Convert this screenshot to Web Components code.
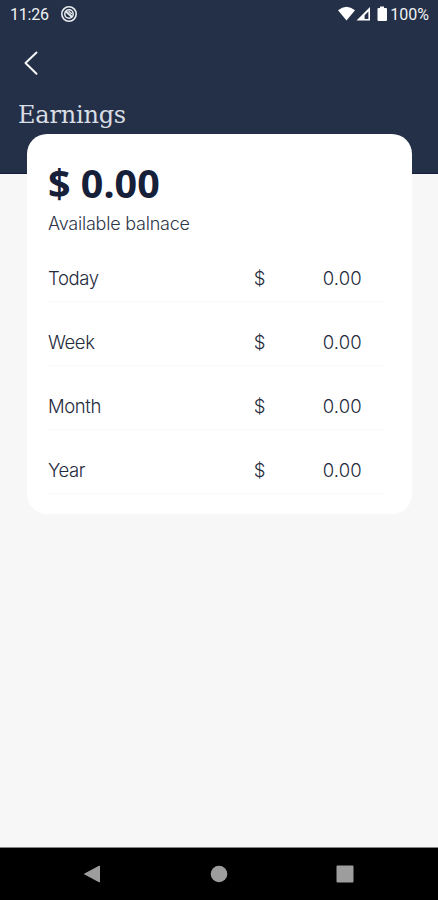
<!DOCTYPE html>
<html lang="en">
<head>
<meta charset="utf-8">
<meta name="viewport" content="width=device-width, initial-scale=1">
<title>Earnings</title>
<style>
    body {
        margin: 0;
        background-color: #f7f7f7;
    }
</style>
</head>
<body>
<earnings-screen></earnings-screen>
<script>
class StatusBar extends HTMLElement {
    constructor() {
        super()
        this.attachShadow({ mode: 'open' })
    }

    connectedCallback() {
        this.shadowRoot.innerHTML = `
            <style>
                :host {
                    display: flex;
                    align-items: center;
                    height: 28px;
                    padding: 1px 9px 0 10px;
                    box-sizing: border-box;
                    color: #f0f2f5;
                    font: 400 16px/28px Roboto, sans-serif;
                }

                svg {
                    display: block;
                    margin-bottom: 2px;
                }

                .time {
                    letter-spacing: -0.2px;
                }

                .app {
                    margin-left: 11px;
                }

                .right {
                    display: flex;
                    align-items: center;
                    margin-left: auto;
                }
            </style>
            <span class="time"><slot name="time"></slot></span>
            <svg class="app" width="18" height="18" viewBox="0 0 18 18" fill="none" stroke="#e8ebef">
                <circle cx="9" cy="9" r="7.2" stroke-width="1.6"/>
                <circle cx="9" cy="9" r="4.2" stroke-width="1.5"/>
                <path d="M5.5 6 L12 12" stroke-width="2"/>
                <path d="M8.5 6 L12 9" stroke-width="1.3"/>
            </svg>
            <div class="right">
                <svg width="52" height="18" viewBox="0 0 52 18" fill="#fff">
                    <path d="M0 5.3 Q8.5 -1.7 17 5.3 L8.5 15.5 Z"/>
                    <path d="M32 2 V15.5 H18.5 Z"/>
                    <path d="M30.4 6.5 V14 H26.6 V10.3 Z" fill="#243047"/>
                    <path d="M42 1.5 H46 V3 H48 Q49 3 49 4 V15 Q49 16 48 16 H40.5 Q39.5 16 39.5 15 V4 Q39.5 3 40.5 3 H42 Z"/>
                </svg>
                <span><slot name="battery"></slot></span>
            </div>
        `
    }
}

class ScreenHeader extends HTMLElement {
    constructor() {
        super()
        this.attachShadow({ mode: 'open' })
    }

    connectedCallback() {
        this.shadowRoot.innerHTML = `
            <style>
                :host {
                    display: block;
                    height: 174px;
                    box-sizing: border-box;
                    background-color: #243047;
                    border-bottom: 1px solid #131d38;
                }

                .back {
                    display: block;
                    margin: 22px 0 0 23px;
                }

                h1 {
                    margin: 21px 0 0 18px;
                    color: #d9dde4;
                    font: 200 24px/36px "Roboto Slab", "DejaVu Serif", serif;
                    letter-spacing: -0.2px;
                    white-space: nowrap;
                }
            </style>
            <slot name="status"></slot>
            <svg class="back" width="16" height="26" viewBox="0 0 16 26" fill="none" stroke="#f4f6f8" stroke-width="2" stroke-linecap="round" stroke-linejoin="round">
                <path d="M13.5 2.5 L2.5 13 L13.5 23.8"/>
            </svg>
            <h1><slot></slot></h1>
        `
    }
}

class EarningsRow extends HTMLElement {
    constructor() {
        super()
        this.attachShadow({ mode: 'open' })
    }

    connectedCallback() {
        this.shadowRoot.innerHTML = `
            <style>
                :host {
                    display: grid;
                    grid-template-columns: 190px 1fr auto;
                    align-items: center;
                    height: 64px;
                    box-sizing: border-box;
                    padding: 16px 24px 0 0;
                    border-bottom: 1px solid #fafafa;
                    color: #252b3c;
                    font: 300 18.5px/30px Inter, sans-serif;
                }

                .period {
                    letter-spacing: -0.4px;
                }

                .currency {
                    text-align: center;
                    width: 43px;
                }

                .amount {
                    letter-spacing: 0.2px;
                }
            </style>
            <span class="period"><slot></slot></span>
            <span class="currency"><slot name="currency"></slot></span>
            <span class="amount"><slot name="amount"></slot></span>
        `
    }
}

class BalanceCard extends HTMLElement {
    constructor() {
        super()
        this.attachShadow({ mode: 'open' })
    }

    connectedCallback() {
        this.shadowRoot.innerHTML = `
            <style>
                :host {
                    display: block;
                    height: 380px;
                    box-sizing: border-box;
                    margin: -40px 26px 0 27px;
                    padding: 25px 26px 0 21px;
                    border-radius: 20px;
                    background-color: #fff;
                }

                .balance {
                    color: #172039;
                    font: 700 39.5px/48px "Noto Sans", sans-serif;
                }

                .caption {
                    height: 31px;
                    color: #30364a;
                    font: 300 18px/34px Inter, sans-serif;
                    letter-spacing: -0.22px;
                }
            </style>
            <div class="balance"><slot name="balance"></slot></div>
            <div class="caption"><slot name="caption"></slot></div>
            <slot></slot>
        `
    }
}

class NavBar extends HTMLElement {
    constructor() {
        super()
        this.attachShadow({ mode: 'open' })
    }

    connectedCallback() {
        this.shadowRoot.innerHTML = `
            <style>
                :host {
                    display: flex;
                    justify-content: space-between;
                    align-items: center;
                    height: 53px;
                    box-sizing: border-box;
                    margin-top: auto;
                    padding: 0 84px 1px 83px;
                    border-top: 1px solid #858585;
                    background-color: #000;
                }
            </style>
            <svg width="18" height="20" viewBox="0 0 18 20"><path d="M1.5 10 L16.5 2 V18 Z" fill="#9d9d9d" stroke="#9d9d9d" stroke-linejoin="round"/></svg>
            <svg width="18" height="18" viewBox="0 0 18 18"><circle cx="9" cy="9" r="8.3" fill="#9d9d9d"/></svg>
            <svg width="18" height="18" viewBox="0 0 18 18"><rect x=".5" y=".5" width="17" height="17" rx="1" fill="#9d9d9d"/></svg>
        `
    }
}

class EarningsScreen extends HTMLElement {
    constructor() {
        super()
        this.attachShadow({ mode: 'open' })
    }

    connectedCallback() {
        const rows = ['Today', 'Week', 'Month', 'Year'].map(period => `
            <earnings-row>
                ${period}
                <span slot="currency">$</span>
                <span slot="amount">0.00</span>
            </earnings-row>
        `).join('')

        this.shadowRoot.innerHTML = `
            <style>
                :host {
                    display: flex;
                    flex-direction: column;
                    height: 900px;
                    background-color: #f7f7f7;
                }
            </style>
            <screen-header>
                <status-bar slot="status">
                    <span slot="time">11:26</span>
                    <span slot="battery">100%</span>
                </status-bar>
                Earnings
            </screen-header>
            <balance-card>
                <span slot="balance">$ 0.00</span>
                <span slot="caption">Available balnace</span>
                ${rows}
            </balance-card>
            <nav-bar></nav-bar>
        `
    }
}

customElements.define('status-bar', StatusBar)
customElements.define('screen-header', ScreenHeader)
customElements.define('earnings-row', EarningsRow)
customElements.define('balance-card', BalanceCard)
customElements.define('nav-bar', NavBar)
customElements.define('earnings-screen', EarningsScreen)
</script>
</body>
</html>
